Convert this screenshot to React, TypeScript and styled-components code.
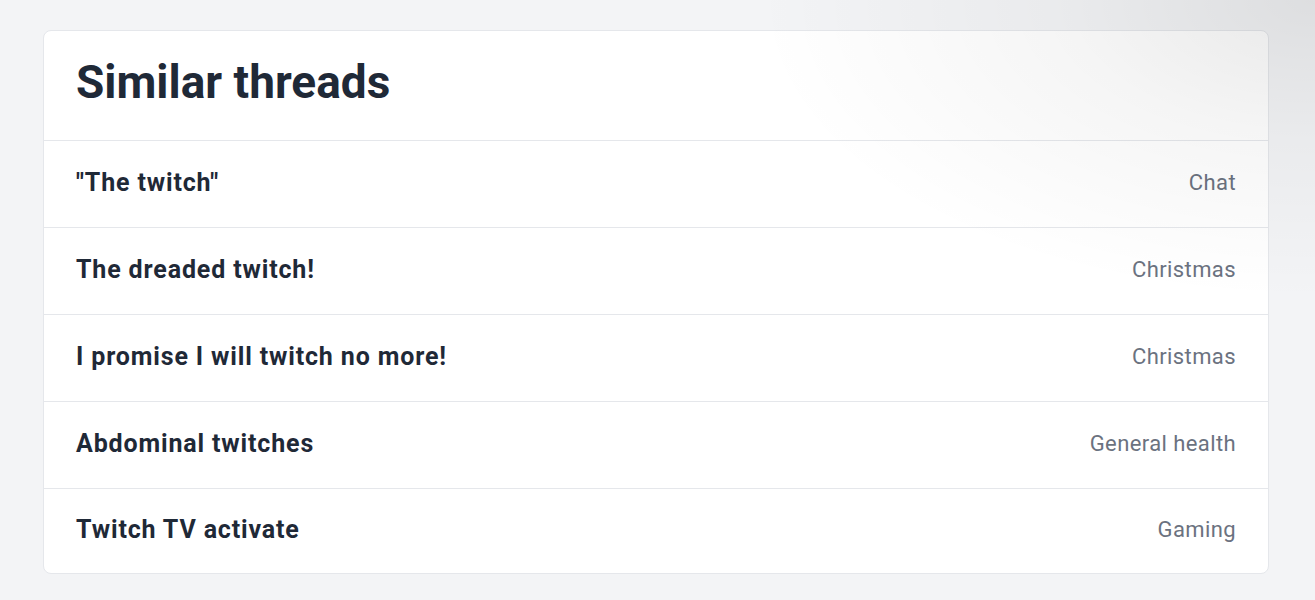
import React from "react";
import styled, { createGlobalStyle } from "styled-components";

const GlobalStyle = createGlobalStyle`
  html, body {
    margin: 0;
    padding: 0;
    background: #f3f4f6;
    font-family: Roboto, "Liberation Sans", sans-serif;
    -webkit-font-smoothing: antialiased;
  }
`;

const Page = styled.div`
  position: relative;
  min-height: 600px;
  padding: 30px 46px 0 43px;
  box-sizing: border-box;
  overflow: hidden;
`;

const Glow = styled.div`
  position: absolute;
  inset: 0;
  pointer-events: none;
  background: radial-gradient(
    ellipse 560px 300px at 100% 0%,
    rgba(0, 0, 0, 0.09) 0%,
    rgba(0, 0, 0, 0.04) 45%,
    rgba(0, 0, 0, 0) 100%
  );
`;

const Card = styled.section`
  background: #fff;
  border: 1px solid #e5e7eb;
  border-radius: 8px;
  overflow: hidden;
`;

const Header = styled.header`
  height: 110px;
  display: flex;
  align-items: center;
  padding: 0 32px 8px;
  box-sizing: border-box;
  border-bottom: 1px solid #e5e7eb;
`;

const Title = styled.h2`
  margin: 0;
  font-size: 46px;
  font-weight: 700;
  color: #1f2937;
`;

const List = styled.ul`
  list-style: none;
  margin: 0;
  padding: 0;
`;

const Row = styled.li`
  height: 86px;
  display: flex;
  align-items: center;
  justify-content: space-between;
  padding: 0 32px 4px;
  box-sizing: border-box;
  & + & {
    border-top: 1px solid #e5e7eb;
    height: 87px;
  }
  &:last-child {
    height: 85px;
  }
`;

const ThreadTitle = styled.a`
  font-size: 25px;
  font-weight: 700;
  color: #1f2937;
  text-decoration: none;
  letter-spacing: 0.85px;
`;

const Category = styled.span`
  font-size: 22px;
  color: #6b7280;
  letter-spacing: 0.4px;
`;

const threads = [
  { title: '"The twitch"', category: "Chat" },
  { title: "The dreaded twitch!", category: "Christmas" },
  { title: "I promise I will twitch no more!", category: "Christmas" },
  { title: "Abdominal twitches", category: "General health" },
  { title: "Twitch TV activate", category: "Gaming" },
];

const App = () => (
  <>
    <GlobalStyle />
    <Page>
      <Card>
        <Header>
          <Title>Similar threads</Title>
        </Header>
        <List>
          {threads.map(({ title, category }) => (
            <Row key={title}>
              <ThreadTitle href="#">{title}</ThreadTitle>
              <Category>{category}</Category>
            </Row>
          ))}
        </List>
      </Card>
      <Glow />
    </Page>
  </>
);

export default App;
